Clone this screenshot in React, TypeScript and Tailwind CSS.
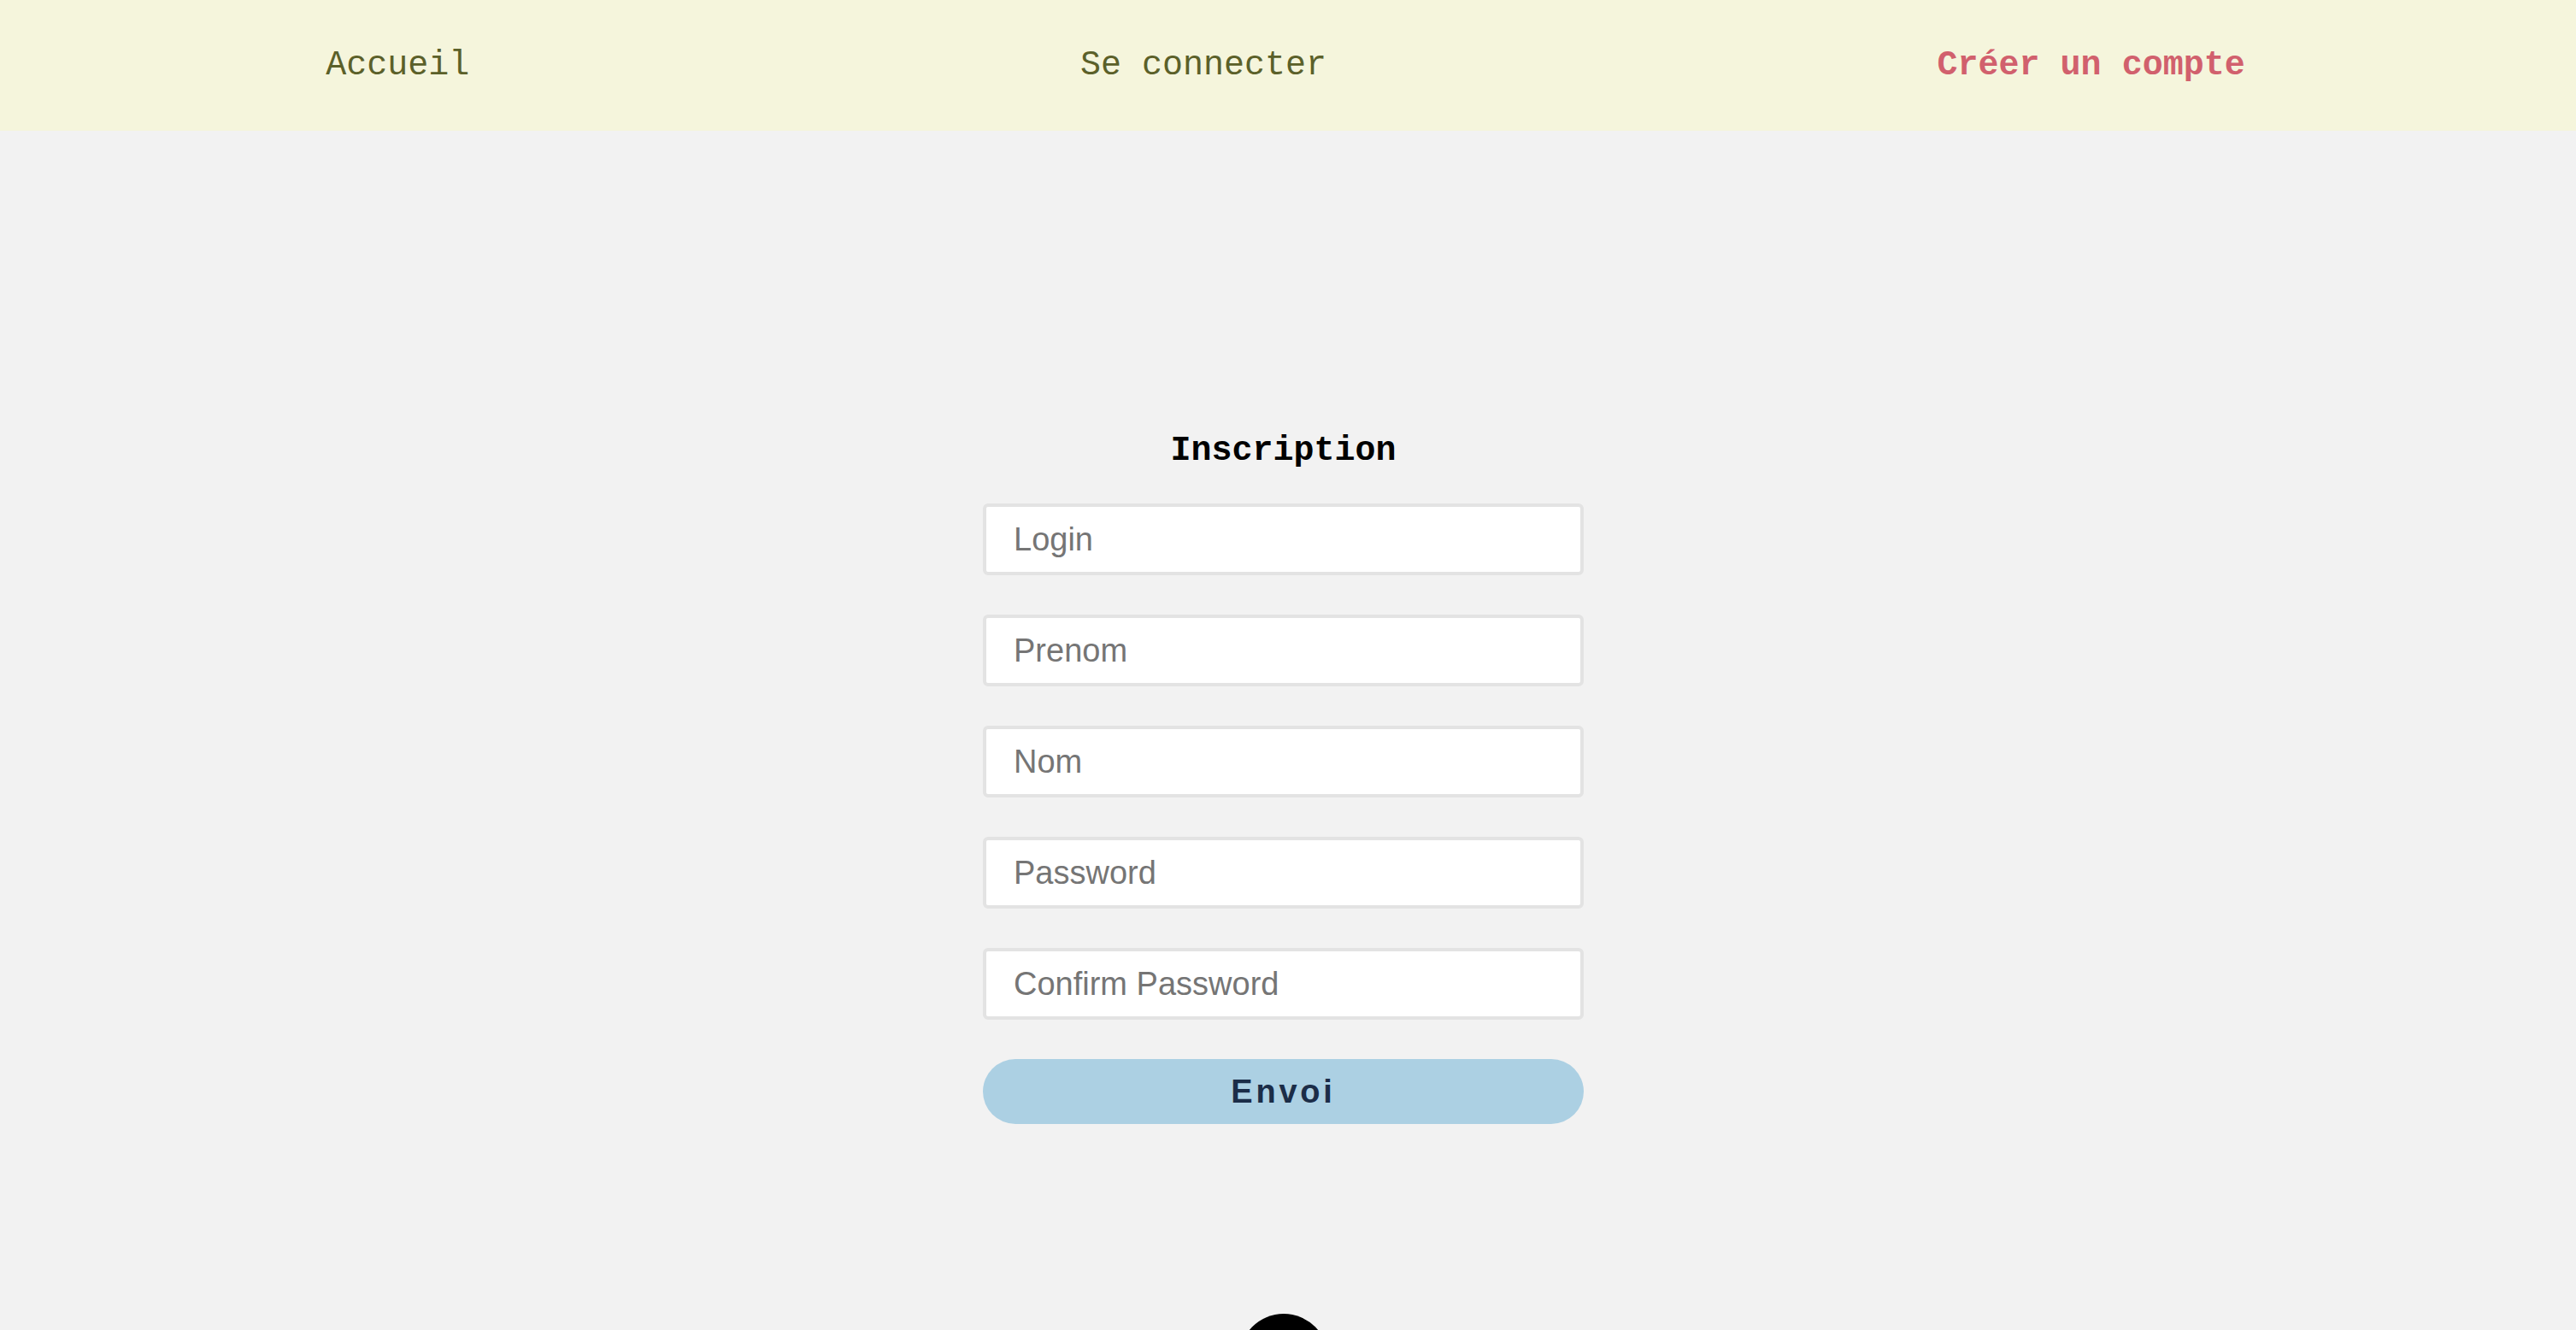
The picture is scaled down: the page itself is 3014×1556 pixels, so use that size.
import React from "react";

const mono = "font-['Courier_New','Liberation_Mono',monospace]";
const sans = "font-['Liberation_Sans',Arial,sans-serif]";

export default function App() {
  const champs = [
    { name: "login", placeholder: "Login", type: "text" },
    { name: "prenom", placeholder: "Prenom", type: "text" },
    { name: "nom", placeholder: "Nom", type: "text" },
    { name: "password", placeholder: "Password", type: "password" },
    { name: "confirm", placeholder: "Confirm Password", type: "password" },
  ];

  return (
    <div className="min-h-screen bg-[#f2f2f2]">
      <nav
        className={`flex h-[153px] items-center justify-around bg-[#f5f5dc] pl-6 pr-[30px] text-[40px] ${mono}`}
      >
        <a href="#" className="text-[#5b6029]">
          Accueil
        </a>
        <a href="#" className="text-[#5b6029]">
          Se connecter
        </a>
        <a href="#" className="font-bold text-[#d1606d]">
          Créer un compte
        </a>
      </nav>

      <main className="flex flex-col items-center pr-[11px]">
        <form
          className="mt-[351px] flex w-[703px] flex-col"
          onSubmit={(e) => e.preventDefault()}
        >
          <h1 className={`text-center text-[40px] font-bold leading-[48px] text-black ${mono}`}>
            Inscription
          </h1>

          <div className="mt-[37px] flex flex-col gap-[46px]">
            {champs.map((champ) => (
              <input
                key={champ.name}
                name={champ.name}
                type={champ.type}
                placeholder={champ.placeholder}
                className={`h-[84px] w-full rounded-md border-4 border-[#e3e3e3] bg-white px-8 text-[38px] text-black outline-none placeholder:text-[#757575] ${sans}`}
              />
            ))}

            <button
              type="submit"
              className={`h-[76px] w-full rounded-full bg-[#acd0e3] text-[38px] font-bold tracking-[0.1em] text-[#1b2d48] ${sans}`}
            >
              Envoi
            </button>
          </div>
        </form>

        {/* pied de page */}
        <div className="mt-[222px] h-[104px] w-[104px] rounded-full bg-black"></div>
      </main>
    </div>
  );
}
